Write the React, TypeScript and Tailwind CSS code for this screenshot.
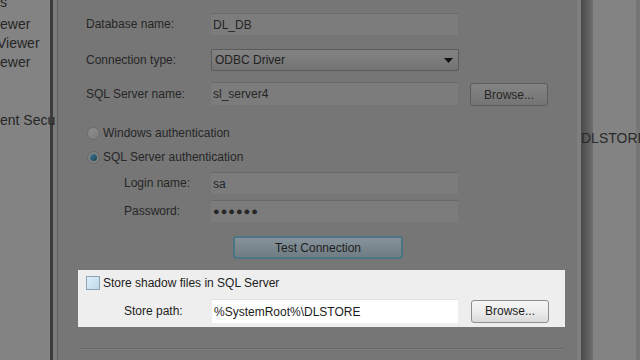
import React from 'react';

const font = { fontFamily: '"Liberation Sans", Arial, sans-serif' };

function Field({ children, className = '' }: { children?: React.ReactNode; className?: string }) {
  return (
    <div
      className={`w-[247px] h-full flex items-center pl-[2px] bg-[#7c7c7c] border-t border-[#6a6a6a] text-[#262626] ${className}`}
    >
      {children}
    </div>
  );
}

function DimButton({ label, className = '' }: { label: string; className?: string }) {
  return (
    <div
      className={`flex items-center justify-center rounded-[3px] border border-[#5c5c5c] bg-gradient-to-b from-[#838383] to-[#757575] text-[#262626] ${className}`}
    >
      {label}
    </div>
  );
}

export default function App() {
  return (
    <div className="w-[640px] h-[360px] flex overflow-hidden bg-[#767676] text-[12px]" style={font}>
      {/* window behind, left side */}
      <div className="relative z-10 w-[50px] shrink-0 bg-[#838383] text-[14px] text-[#262626] leading-none">
        <div className="flex flex-col whitespace-nowrap">
          <span className="mt-[-5px] h-[14px]">s</span>
          <span className="mt-[8px] h-[14px]">ewer</span>
          <span className="mt-[5px] h-[14px] ml-[-3px]">Viewer</span>
          <span className="mt-[5px] h-[14px]">ewer</span>
          <span className="mt-[44px] h-[14px]">ent Secu</span>
        </div>
      </div>
      <div className="w-[3px] shrink-0 bg-[#3c3c3c]" />
      <div className="w-[5px] shrink-0 bg-[#7b7b7b] border-r border-[#5f5f5f]" />

      {/* dialog */}
      <div className="w-[519px] shrink-0 flex flex-col">
        {/* database name */}
        <div className="mt-[13px] h-[22px] flex items-center">
          <span className="pl-[28px] w-[153px] text-[#262626]">Database name:</span>
          <Field>DL_DB</Field>
        </div>

        {/* connection type */}
        <div className="mt-[14px] h-[22px] flex items-center">
          <span className="pl-[28px] w-[153px] text-[#262626]">Connection type:</span>
          <div className="w-[248px] h-full relative flex items-center pl-[3px] rounded-[2px] border border-[#5a5a5a] bg-gradient-to-b from-[#828282] via-[#7c7c7c] to-[#727272] text-[#222]">
            ODBC Driver
            <svg className="absolute right-[5px] top-[8px]" width="9" height="5" viewBox="0 0 9 5">
              <path d="M0 0 H9 L4.5 5 Z" fill="#111" />
            </svg>
          </div>
        </div>

        {/* sql server name */}
        <div className="mt-[11px] h-[23px] flex items-center">
          <span className="pl-[28px] w-[153px] text-[#262626]">SQL Server name:</span>
          <Field>sl_server4</Field>
          <DimButton label="Browse..." className="ml-[12px] w-[78px] h-[23px] mt-[2px]" />
        </div>

        {/* auth radios */}
        <div className="mt-[21px] h-[14px] flex items-center pl-[29px] gap-[3px] text-[#262626]">
          <span className="w-[13px] h-[13px] rounded-full border border-[#6c6c6c] bg-gradient-to-br from-[#8e8e8e] to-[#7c7c7c]" />
          <span>Windows authentication</span>
        </div>
        <div className="mt-[10px] h-[14px] flex items-center pl-[29px] gap-[3px] text-[#262626]">
          <span className="w-[13px] h-[13px] rounded-full border border-[#666] bg-[#818181] flex items-center justify-center">
            <span className="w-[7px] h-[7px] rounded-full bg-gradient-to-br from-[#3f7e95] to-[#1d3e4d]" />
          </span>
          <span>SQL Server authentication</span>
        </div>

        {/* login */}
        <div className="mt-[8px] h-[22px] flex items-center">
          <span className="pl-[66px] w-[153px] text-[#262626]">Login name:</span>
          <Field>sa</Field>
        </div>
        <div className="mt-[6px] h-[22px] flex items-center">
          <span className="pl-[66px] w-[153px] text-[#262626]">Password:</span>
          <Field className="tracking-[1px] text-[11px]">●●●●●●</Field>
        </div>

        {/* test connection */}
        <div className="mt-[14px] h-[23px] flex">
          <div className="ml-[175px] w-[170px] h-full flex items-center justify-center rounded-[3px] border-2 border-[#4c7584] bg-gradient-to-b from-[#86939a] to-[#6f7c83] text-[#1f1f1f]">
            Test Connection
          </div>
        </div>

        {/* highlighted group */}
        <div className="mt-[11px] ml-[20px] w-[487px] h-[57px] flex flex-col bg-[#eeeeee] text-[#1c1c1c]">
          <div className="mt-[6px] h-[14px] flex items-center gap-[3px] pl-[8px]">
            <span className="w-[14px] h-[14px] border border-[#8ea3b4] bg-gradient-to-br from-[#e0eef8] to-[#bcd8ec]" />
            <span>Store shadow files in SQL Server</span>
          </div>
          <div className="mt-[9px] h-[24px] flex items-center">
            <span className="pl-[46px] w-[134px]">Store path:</span>
            <div className="w-[246px] h-full flex items-center pl-[2px] bg-white border-t border-[#e2e2e2]">
              %SystemRoot%\DLSTORE
            </div>
            <div className="ml-[13px] w-[78px] h-[23px] flex items-center justify-center rounded-[3px] border border-[#8e8e8e] bg-gradient-to-b from-[#f6f6f6] via-[#ececec] to-[#dadada]">
              Browse...
            </div>
          </div>
        </div>

        {/* bottom separator */}
        <div className="mt-[21px] ml-[20px] w-[487px] h-[2px] border-t border-[#6a6a6a] bg-[#7e7e7e]" />
      </div>

      {/* dialog right border and window behind */}
      <div className="w-[4px] shrink-0 bg-[#7f7f7f]" />
      <div className="w-[12px] shrink-0 bg-gradient-to-r from-[#4a4a4a] to-[#6e6e6e]" />
      <div className="w-[43px] shrink-0 bg-[#838383] text-[14px] text-[#2a2a2a] leading-none whitespace-nowrap">
        <span className="block mt-[131px] ml-[-12px]">DLSTORE</span>
      </div>
    </div>
  );
}
